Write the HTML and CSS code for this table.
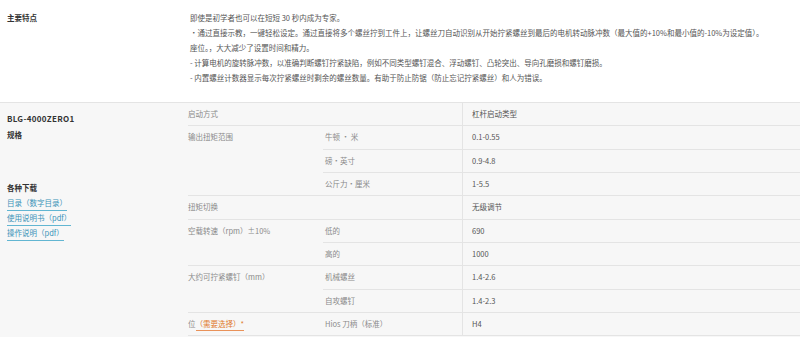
FILE: index.html
```html
<!DOCTYPE html>
<html lang="zh-CN">
<head>
<meta charset="utf-8">
<title>BLG-4000ZERO1</title>
<link rel="stylesheet" href="styles.css">
</head>
<body>
<section class="features">
  <h2 class="features-title">主要特点</h2>
  <div class="features-body">
    <p>即使是初学者也可以在短短 30 秒内成为专家。</p>
    <p>・通过直接示教，一键轻松设定。通过直接将多个螺丝拧到工件上，让螺丝刀自动识别从开始拧紧螺丝到最后的电机转动脉冲数（最大值的+10%和最小值的-10%为设定值）。座位。，大大减少了设置时间和精力。</p>
    <p>- 计算电机的旋转脉冲数，以准确判断螺钉拧紧缺陷，例如不同类型螺钉混合、浮动螺钉、凸轮突出、导向孔磨损和螺钉磨损。</p>
    <p>- 内置螺丝计数器显示每次拧紧螺丝时剩余的螺丝数量。有助于防止防锯（防止忘记拧紧螺丝）和人为错误。</p>
  </div>
</section>
<section class="spec">
  <aside class="spec-side">
    <h1 class="model">BLG-4000ZERO1</h1>
    <h3 class="side-title">规格</h3>
    <h3 class="side-title downloads-title">各种下载</h3>
    <div class="dl-item"><a href="#" class="dl-link">目录（数字目录）</a></div>
    <div class="dl-item"><a href="#" class="dl-link">使用说明书（pdf）</a></div>
    <div class="dl-item"><a href="#" class="dl-link">操作说明（pdf）</a></div>
  </aside>
  <div class="spec-table">
    <div class="cell label wide">启动方式</div>
    <div class="cell value">杠杆启动类型</div>

    <div class="cell label span3">输出扭矩范围</div>
    <div class="cell sub">牛顿 · 米</div>
    <div class="cell value">0.1-0.55</div>
    <div class="cell sub">磅·英寸</div>
    <div class="cell value">0.9-4.8</div>
    <div class="cell sub">公斤力·厘米</div>
    <div class="cell value">1-5.5</div>

    <div class="cell label wide">扭矩切换</div>
    <div class="cell value">无级调节</div>

    <div class="cell label span2">空载转速（rpm）±10%</div>
    <div class="cell sub">低的</div>
    <div class="cell value">690</div>
    <div class="cell sub">高的</div>
    <div class="cell value">1000</div>

    <div class="cell label span2">大约可拧紧螺钉（mm）</div>
    <div class="cell sub">机械螺丝</div>
    <div class="cell value">1.4-2.6</div>
    <div class="cell sub">自攻螺钉</div>
    <div class="cell value">1.4-2.3</div>

    <div class="cell label">位<a href="#" class="required">（需要选择）*</a></div>
    <div class="cell sub">Hios 刀柄（标准）</div>
    <div class="cell value">H4</div>
  </div>
</section>
</body>
</html>
```

FILE: styles.css
```css
* { box-sizing: border-box; }

html, body {
  margin: 0;
  padding: 0;
}

body {
  font-family: "Noto Sans CJK SC", "Noto Sans", sans-serif;
  font-size: 7.5px;
  color: #555;
  background: #f7f7f7;
  width: 800px;
  height: 337px;
  overflow: hidden;
}

h1, h2, h3, p { margin: 0; }

.features {
  display: grid;
  grid-template-columns: 190px 1fr;
  height: 103px;
  padding-top: 10px;
  background: #fff;
  border-bottom: 1px solid #e4e4e4;
}

.features-title {
  font-size: 7.5px;
  font-weight: 700;
  line-height: 15px;
  color: #333;
  padding-left: 7px;
}

.features-body {
  padding-right: 30px;
  line-height: 15px;
  color: #555;
}

.spec {
  display: grid;
  grid-template-columns: 188px 1fr;
}

.spec-side {
  padding: 8px 0 0 7px;
}

.model {
  font-size: 8px;
  font-weight: 700;
  line-height: 16px;
  color: #333;
  letter-spacing: 0.3px;
}

.side-title {
  font-size: 7.5px;
  font-weight: 700;
  line-height: 16px;
  color: #333;
}

.downloads-title {
  margin-top: 37px;
}

.dl-item {
  margin-top: 1px;
  margin-bottom: 1px;
}

.dl-link {
  display: inline-block;
  line-height: 12px;
  padding-bottom: 1px;
  color: #3a93b8;
  text-decoration: none;
  border-bottom: 1px solid #62b6d2;
}

.spec-table {
  display: grid;
  grid-template-columns: 135px 139px 1fr;
  grid-auto-rows: 23.33px;
}

.cell {
  border-bottom: 1px solid #e4e4e4;
  line-height: 22.33px;
  white-space: nowrap;
}

.label {
  color: #8a8a8a;
}

.label.wide { grid-column: span 2; }
.label.span3 { grid-row: span 3; }
.label.span2 { grid-row: span 2; }

.sub {
  color: #8a8a8a;
  padding-left: 2px;
}

.value {
  color: #555;
  padding-left: 9px;
  border-left: 1px solid #e4e4e4;
}

.required {
  color: #e07a2c;
  text-decoration: none;
  border-bottom: 1px solid #e9925a;
  padding-bottom: 1px;
}
```
